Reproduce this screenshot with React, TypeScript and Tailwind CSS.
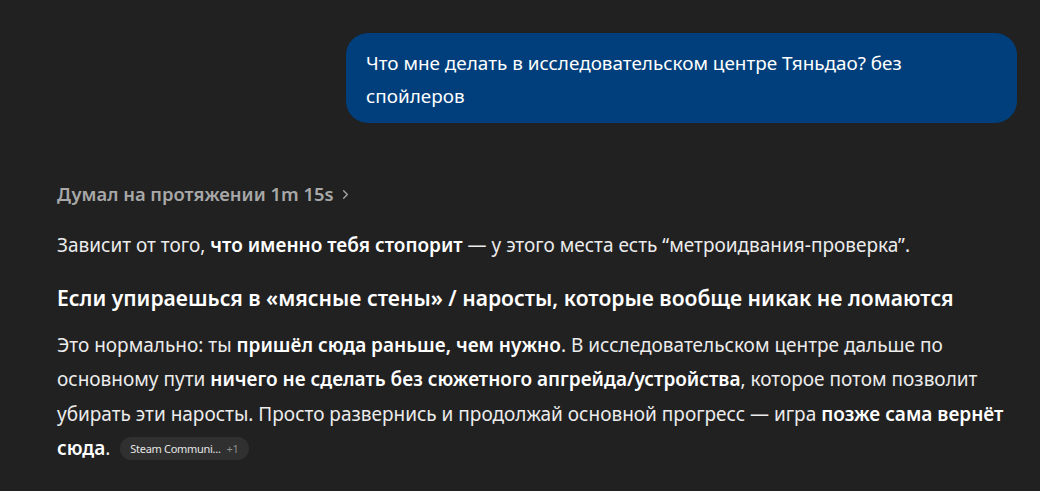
import React from 'react';
import { ChevronRight } from 'lucide-react';

function UserBubble({ children }: { children: React.ReactNode }) {
  return (
    <div className="flex justify-end">
      <div className="w-[671px] rounded-[22px] bg-[#003f7c] pl-5 pr-[40px] pt-[14px] pb-[10px] text-[18.9px] leading-[33px] text-white">
        {children}
      </div>
    </div>
  );
}

function SourcePill() {
  return (
    <span className="ml-[10px] inline-flex h-[23px] items-center gap-[6px] rounded-full bg-[#303030] px-[10px] align-[2px] text-[11px] leading-none font-normal tracking-[-0.3px]">
      <span className="text-[#e6e6e6]">Steam Communi...</span>
      <span className="text-[#8f8f8f]">+1</span>
    </span>
  );
}

export default function App() {
  return (
    <div
      className="min-h-[491px] w-[1040px] bg-[#212121] text-[#ececec]"
      style={{ fontFamily: '"Noto Sans", "Open Sans", sans-serif' }}
    >
      <div className="pl-[57px] pr-[23px] pt-[33px]">
        <UserBubble>Что мне делать в исследовательском центре Тяньдао? без спойлеров</UserBubble>

        <div className="mt-[58px] flex h-[26px] items-center gap-[4px] text-[18.4px] font-semibold text-[#a8a8a8]">
          <span>Думал на протяжении 1m 15s</span>
          <ChevronRight className="h-[15px] w-[15px]" strokeWidth={2} />
        </div>

        <p className="mt-[21px] text-[19px] leading-[34px]">
          Зависит от того, <b className="font-semibold text-white">что именно тебя стопорит</b> — у этого места есть “метроидвания-проверка”.
        </p>

        <h3 className="mt-[20px] text-[21.1px] font-semibold leading-[32px] text-white">
          Если упираешься в «мясные стены» / наросты, которые вообще никак не ломаются
        </h3>

        <p className="mt-[14px] text-[19px] leading-[34.3px]">
          Это нормально: ты <b className="font-semibold text-white">пришёл сюда раньше, чем нужно</b>. В исследовательском центре дальше по основному пути{' '}
          <b className="font-semibold text-white">ничего не сделать без сюжетного апгрейда/устройства</b>, которое потом позволит убирать эти наросты. Просто развернись и продолжай основной прогресс — игра{' '}
          <b className="font-semibold text-white">позже сама вернёт сюда</b>.
          <SourcePill />
        </p>
      </div>
    </div>
  );
}
